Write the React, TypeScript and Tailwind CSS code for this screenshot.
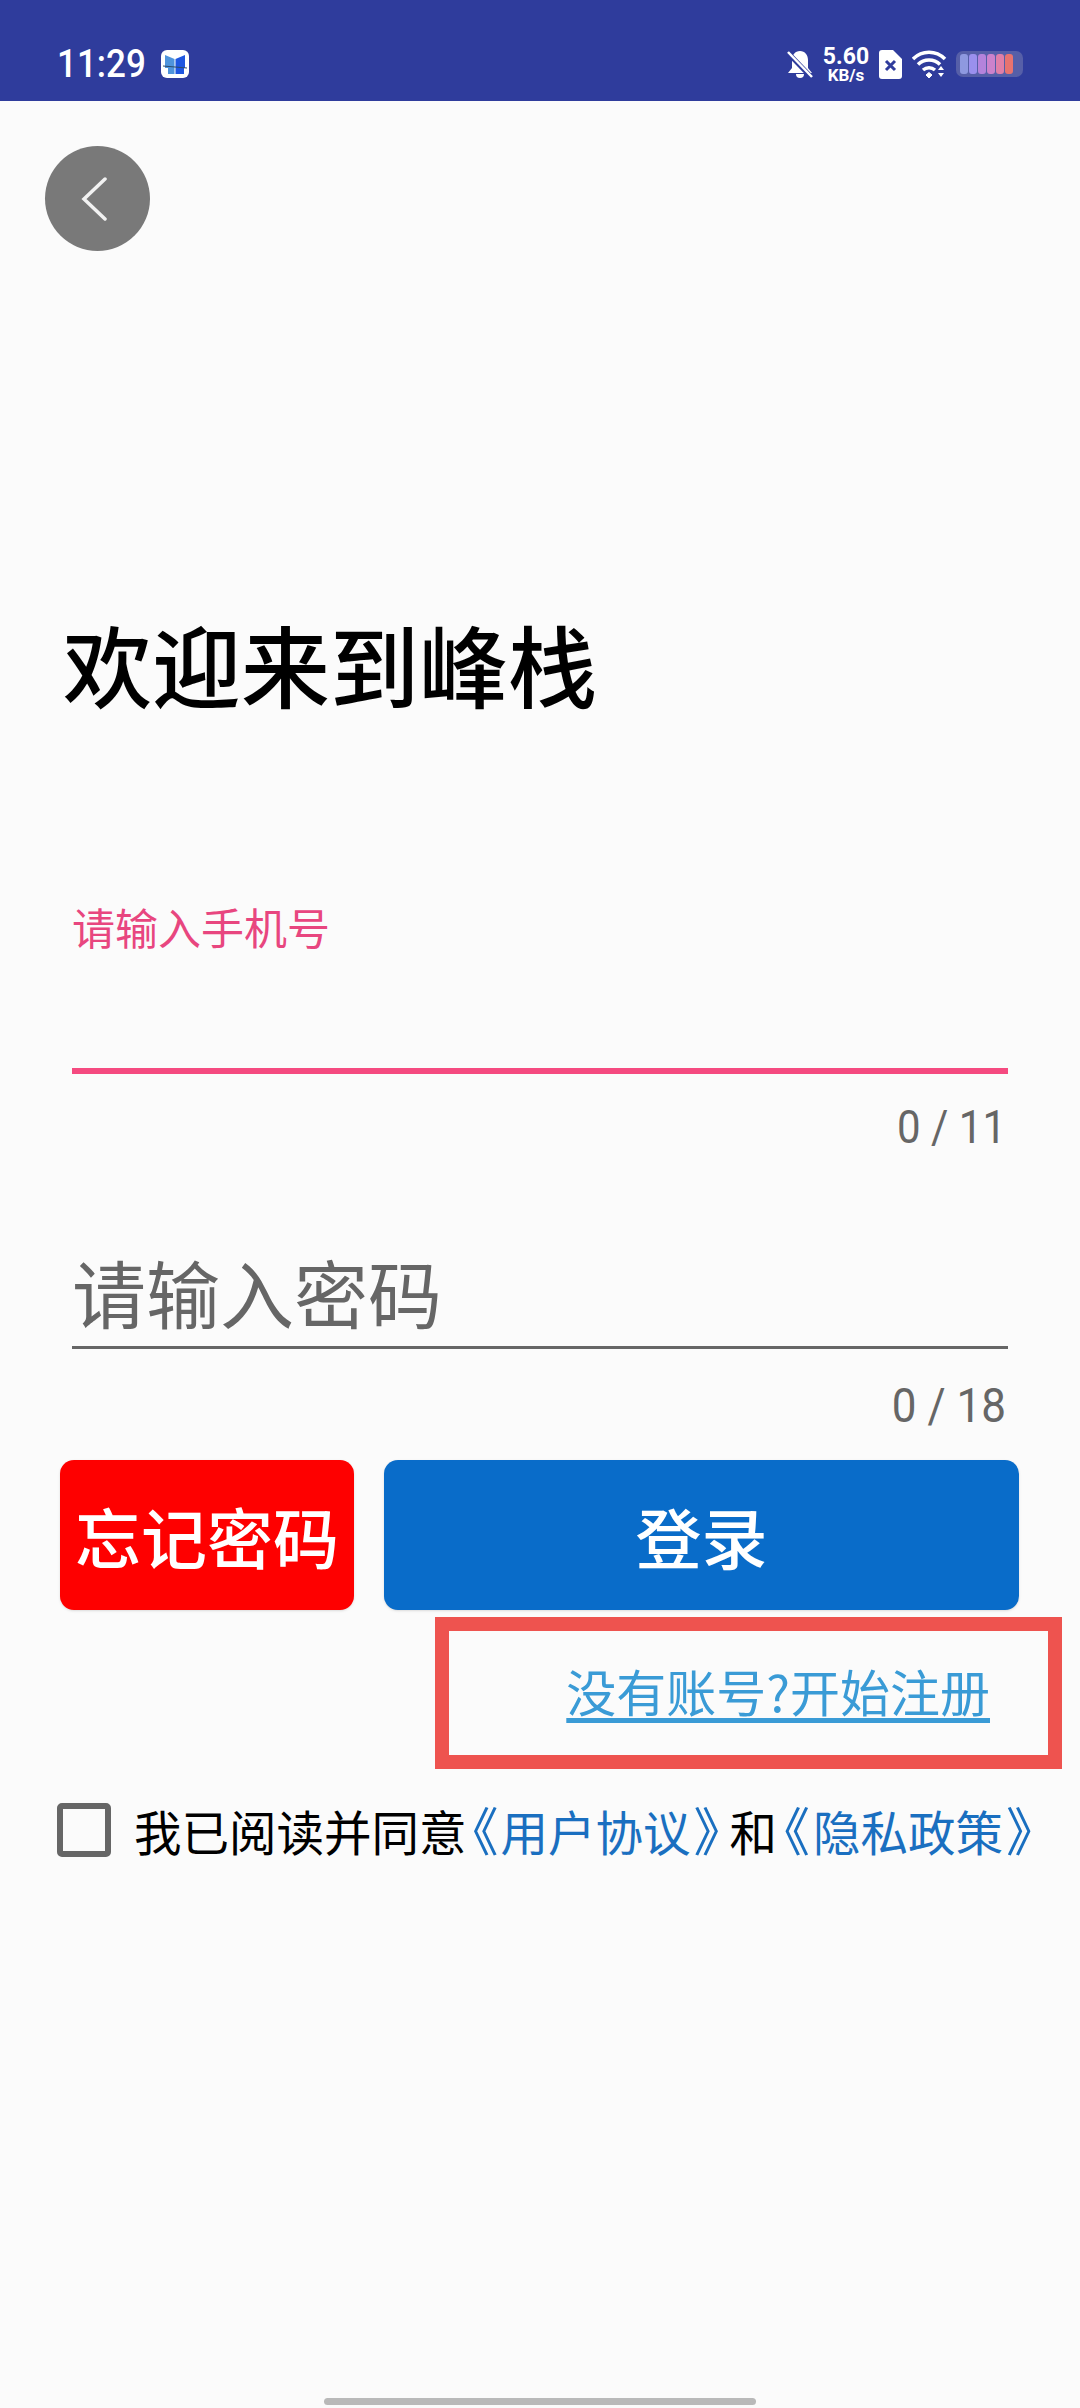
import { useState } from "react";

const cjk = { fontFamily: '"Noto Sans CJK SC", sans-serif' };
const roboto = { fontFamily: "Roboto, sans-serif" };

function StatusBar() {
  return (
    <div className="flex h-[101px] items-center bg-[#2f3c9c] pt-[27px] pl-[57px] pr-[57px] text-white">
      <span className="origin-center scale-y-110 text-[35px] font-medium leading-none" style={roboto}>
        11:29
      </span>
      {/* app badge */}
      <svg className="ml-[15px] h-[28px] w-[28px]" viewBox="0 0 28 28">
        <rect width="28" height="28" rx="6" fill="#fff" />
        <path d="M4 5l9.500 4v15H7v-6H4z" fill="#4f94dc" />
        <path d="M14.500 9L24 5v13h-1v6h-8.500z" fill="#1f56e0" />
        <path d="M2 16l24 2" stroke="#2c4a6a" strokeWidth="1" />
      </svg>
      <div className="ml-auto flex items-center">
        <svg className="h-[30px] w-[28px]" viewBox="0 0 28 30">
          <path d="M14 2c5 0 8 4 8 9v8l4 5H2l4-5v-8c0-5 3-9 8-9z" fill="#fff" />
          <path d="M10 25a4 4 0 0 0 8 0z" fill="#fff" />
          <path d="M2 4l24 25" stroke="#2f3c9c" strokeWidth="5" />
          <path d="M2 3l24 25" stroke="#fff" strokeWidth="2.500" />
        </svg>
        <div className="ml-[8px] flex w-[48px] flex-col items-center font-bold leading-none" style={roboto}>
          <span className="text-[23px] leading-[21px]">5.60</span>
          <span className="text-[17px] leading-[16px]">KB/s</span>
        </div>
        <svg className="ml-[9px] h-[29px] w-[23px]" viewBox="0 0 23 29">
          <path d="M3 0h11l9 9v17a3 3 0 0 1-3 3H3a3 3 0 0 1-3-3V3a3 3 0 0 1 3-3z" fill="#fff" />
          <path d="M7 11l9 9M16 11l-9 9" stroke="#2f3c9c" strokeWidth="3" />
        </svg>
        <svg className="ml-[10px] h-[28px] w-[35px]" viewBox="0 0 35 28" fill="none" stroke="#fff" strokeWidth="3.500">
          <path d="M1 9c9-9 23-9 32 0" />
          <path d="M6 14.500c6-6 16-6 22 0" />
          <path d="M11 20c3.500-3 8.500-3 12 0" />
          <path d="M14 25l3 3 3-3-3-2.500z" fill="#fff" strokeWidth="1" />
          <path d="M26 20l3-4 3 4zM26 23l3 4 3-4z" fill="#fff" stroke="none" />
        </svg>
        <div className="ml-[9px] flex h-[26px] w-[67px] items-center gap-[1px] rounded-[7px] bg-[#565fa8] pl-[4px]">
          {["#8e99e0", "#9a90ee", "#b483dc", "#cc82cc", "#e07fa8", "#e8736f"].map((c) => (
            <span key={c} className="h-[20px] w-[8px] rounded-[3px]" style={{ backgroundColor: c }} />
          ))}
        </div>
      </div>
    </div>
  );
}

export default function App() {
  const [agreed, setAgreed] = useState(false);

  return (
    <div className="flex h-[2408px] w-[1080px] flex-col overflow-hidden bg-[#fbfbfb]" style={cjk}>
      <StatusBar />

      <div className="flex grow flex-col">
        <button className="ml-[45px] mt-[45px] flex h-[105px] w-[105px] items-center justify-center rounded-full bg-[#797979]">
          <svg className="h-[44px] w-[26px] -translate-x-[4px]" viewBox="0 0 26 44" fill="none" stroke="#f2f2f2" strokeWidth="3.500" strokeLinecap="round">
            <path d="M24 2L3 22l21 20" />
          </svg>
        </button>

        <h1 className="ml-[63px] mt-[362px] text-[89px] font-medium leading-[100px] text-black">欢迎来到峰栈</h1>

        {/* phone */}
        <div className="ml-[72px] mr-[72px] mt-[188px]">
          <label className="block text-[43px] leading-[50px] text-[#e8467f]">请输入手机号</label>
          <div className="mt-[117px] h-[6px] bg-[#f54a80]" />
          <div className="mt-[29px] origin-right scale-y-110 pr-[2px] text-right text-[42px] leading-[50px] text-[#666]" style={roboto}>
            0 / 11
          </div>
        </div>

        {/* password */}
        <div className="ml-[72px] mr-[72px] mt-[93px]">
          <div className="text-[74px] leading-[90px] text-[#666]">请输入密码</div>
          <div className="mt-[10px] h-[3px] bg-[#666]" />
          <div className="mt-[31px] origin-right scale-y-110 pr-[2px] text-right text-[44px] leading-[50px] text-[#666]" style={roboto}>
            0 / 18
          </div>
        </div>

        <div className="ml-[60px] mr-[61px] mt-[30px] flex h-[150px] gap-[30px]">
          <button className="w-[294px] rounded-[14px] bg-[#fe0000] text-[66px] font-medium text-white shadow-sm">忘记密码</button>
          <button className="grow rounded-[14px] bg-[#096cc9] text-[66px] font-medium text-white shadow-sm">登录</button>
        </div>

        {/* annotation frame around the register link */}
        <div className="mr-[18px] mt-[7px] flex justify-end">
          <div className="flex h-[152px] w-[627px] items-center justify-end border-[14px] border-[#ee534f] pb-[6px] pr-[58px]">
            <a className="text-[50px] leading-[60px] text-[#3a9bd6] underline underline-offset-[6px]">没有账号?开始注册</a>
          </div>
        </div>

        <div className="ml-[57px] mt-[33px] flex items-center">
          <button
            onClick={() => setAgreed(!agreed)}
            className="h-[54px] w-[54px] rounded-[5px] border-[6px] border-[#666]"
          />
          <p className="ml-[23px] whitespace-nowrap text-[47.500px] leading-[54px] text-black">
            我已阅读并同意
            <span className="text-[#1a6fc0]">
              <span className="ml-[5px] mr-[3px] text-[52px] [font-feature-settings:'palt']">《</span>用户协议
              <span className="ml-[4px] mr-[9px] text-[52px] [font-feature-settings:'palt']">》</span>
            </span>
            和
            <span className="text-[#1a6fc0]">
              <span className="ml-[6px] mr-[4px] text-[52px] [font-feature-settings:'palt']">《</span>隐私政策
              <span className="ml-[4px] text-[52px] [font-feature-settings:'palt']">》</span>
            </span>
          </p>
        </div>
      </div>

      <div className="mb-[3px] h-[7px] w-[432px] self-center rounded-full bg-[#b9b9b9]" />
    </div>
  );
}
